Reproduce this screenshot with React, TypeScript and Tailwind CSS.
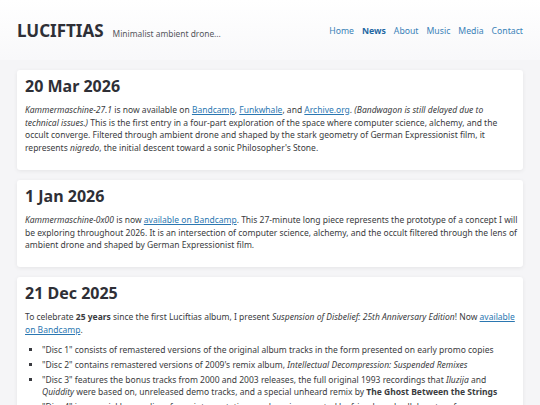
import React from "react";

const A = ({ children }: { children: React.ReactNode }) => (
  <a href="#" className="text-[#2b77b1] underline decoration-[#2b77b1]">
    {children}
  </a>
);

const Card = ({ date, children }: { date: string; children: React.ReactNode }) => (
  <article className="bg-white rounded-[3px] shadow-[0_1px_4px_rgba(0,0,0,0.07)] pl-2 pr-[2px] pt-[7px] pb-[15px]">
    <h2 className="text-[16px] leading-[19px] font-bold text-[#2e2f36] mb-[8px]">{date}</h2>
    {children}
  </article>
);

export default function App() {
  const nav = ["Home", "News", "About", "Music", "Media", "Contact"];
  return (
    <div
      className="min-h-[405px] bg-[#f5f5f7] text-[#3a3b40] text-[8.5px] leading-[12.7px]"
      style={{ fontFamily: '"Noto Sans", "Open Sans", sans-serif' }}
    >
      <header className="bg-gradient-to-b from-white to-[#f8f8fa] h-[60px] px-[17px] flex items-center">
        <div className="flex items-baseline gap-[9px] pt-[2px]">
          <h1 className="text-[17px] leading-none font-bold text-[#2e2f36]">LUCIFTIAS</h1>
          <span className="text-[8.4px] text-[#55565c]">Minimalist ambient drone...</span>
        </div>
        <nav className="ml-auto flex gap-[8px] text-[8.7px] text-[#3a82b8] pt-[2px]">
          {nav.map((n) => (
            <a key={n} href="#" className={n === "News" ? "font-bold text-[#1f68a3]" : ""}>
              {n}
            </a>
          ))}
        </nav>
      </header>

      <main className="px-[17px] pt-[10px] flex flex-col gap-[10px]">
        <Card date="20 Mar 2026">
          <p className="pr-[6px]">
            <em>Kammermaschine-27.1</em> is now available on <A>Bandcamp</A>, <A>Funkwhale</A>, and{" "}
            <A>Archive.org</A>. <em>(Bandwagon is still delayed due to technical issues.)</em> This is the first
            entry in a four-part exploration of the space where computer science, alchemy, and the occult
            converge. Filtered through ambient drone and shaped by the stark geometry of German Expressionist
            film, it represents <em>nigredo</em>, the initial descent toward a sonic Philosopher's Stone.
          </p>
        </Card>

        <Card date="1 Jan 2026">
          <p>
            <em>Kammermaschine-0x00</em> is now <A>available on Bandcamp</A>. This 27-minute long piece represents
            the prototype of a concept I will be exploring throughout 2026. It is an intersection of computer
            science, alchemy, and the occult filtered through the lens of ambient drone and shaped by German
            Expressionist film.
          </p>
        </Card>

        <Card date="21 Dec 2025">
          <p>
            To celebrate <strong>25 years</strong> since the first Luciftias album, I present{" "}
            <em>Suspension of Disbelief: 25th Anniversary Edition</em>! Now <A>available on Bandcamp</A>.
          </p>
          <ul className="list-[square] pl-[17px] pr-[10px] mt-[8px] flex flex-col gap-[2px] marker:text-[#3a3b40]">
            <li>"Disc 1" consists of remastered versions of the original album tracks in the form presented on early promo copies</li>
            <li>
              "Disc 2" contains remastered versions of 2009's remix album,{" "}
              <em>Intellectual Decompression: Suspended Remixes</em>
            </li>
            <li>
              "Disc 3" features the bonus tracks from 2000 and 2003 releases, the full original 1993 recordings
              that <em>Iluzija</em> and <em>Quiddity</em> were based on, unreleased demo tracks, and a special
              unheard remix by <strong>The Ghost Between the Strings</strong>
            </li>
            <li>
              "Disc 4" is a special bonus disc of new interpretations and remixes created by friends and
              collaborators from across the years
            </li>
          </ul>
        </Card>
      </main>
    </div>
  );
}
